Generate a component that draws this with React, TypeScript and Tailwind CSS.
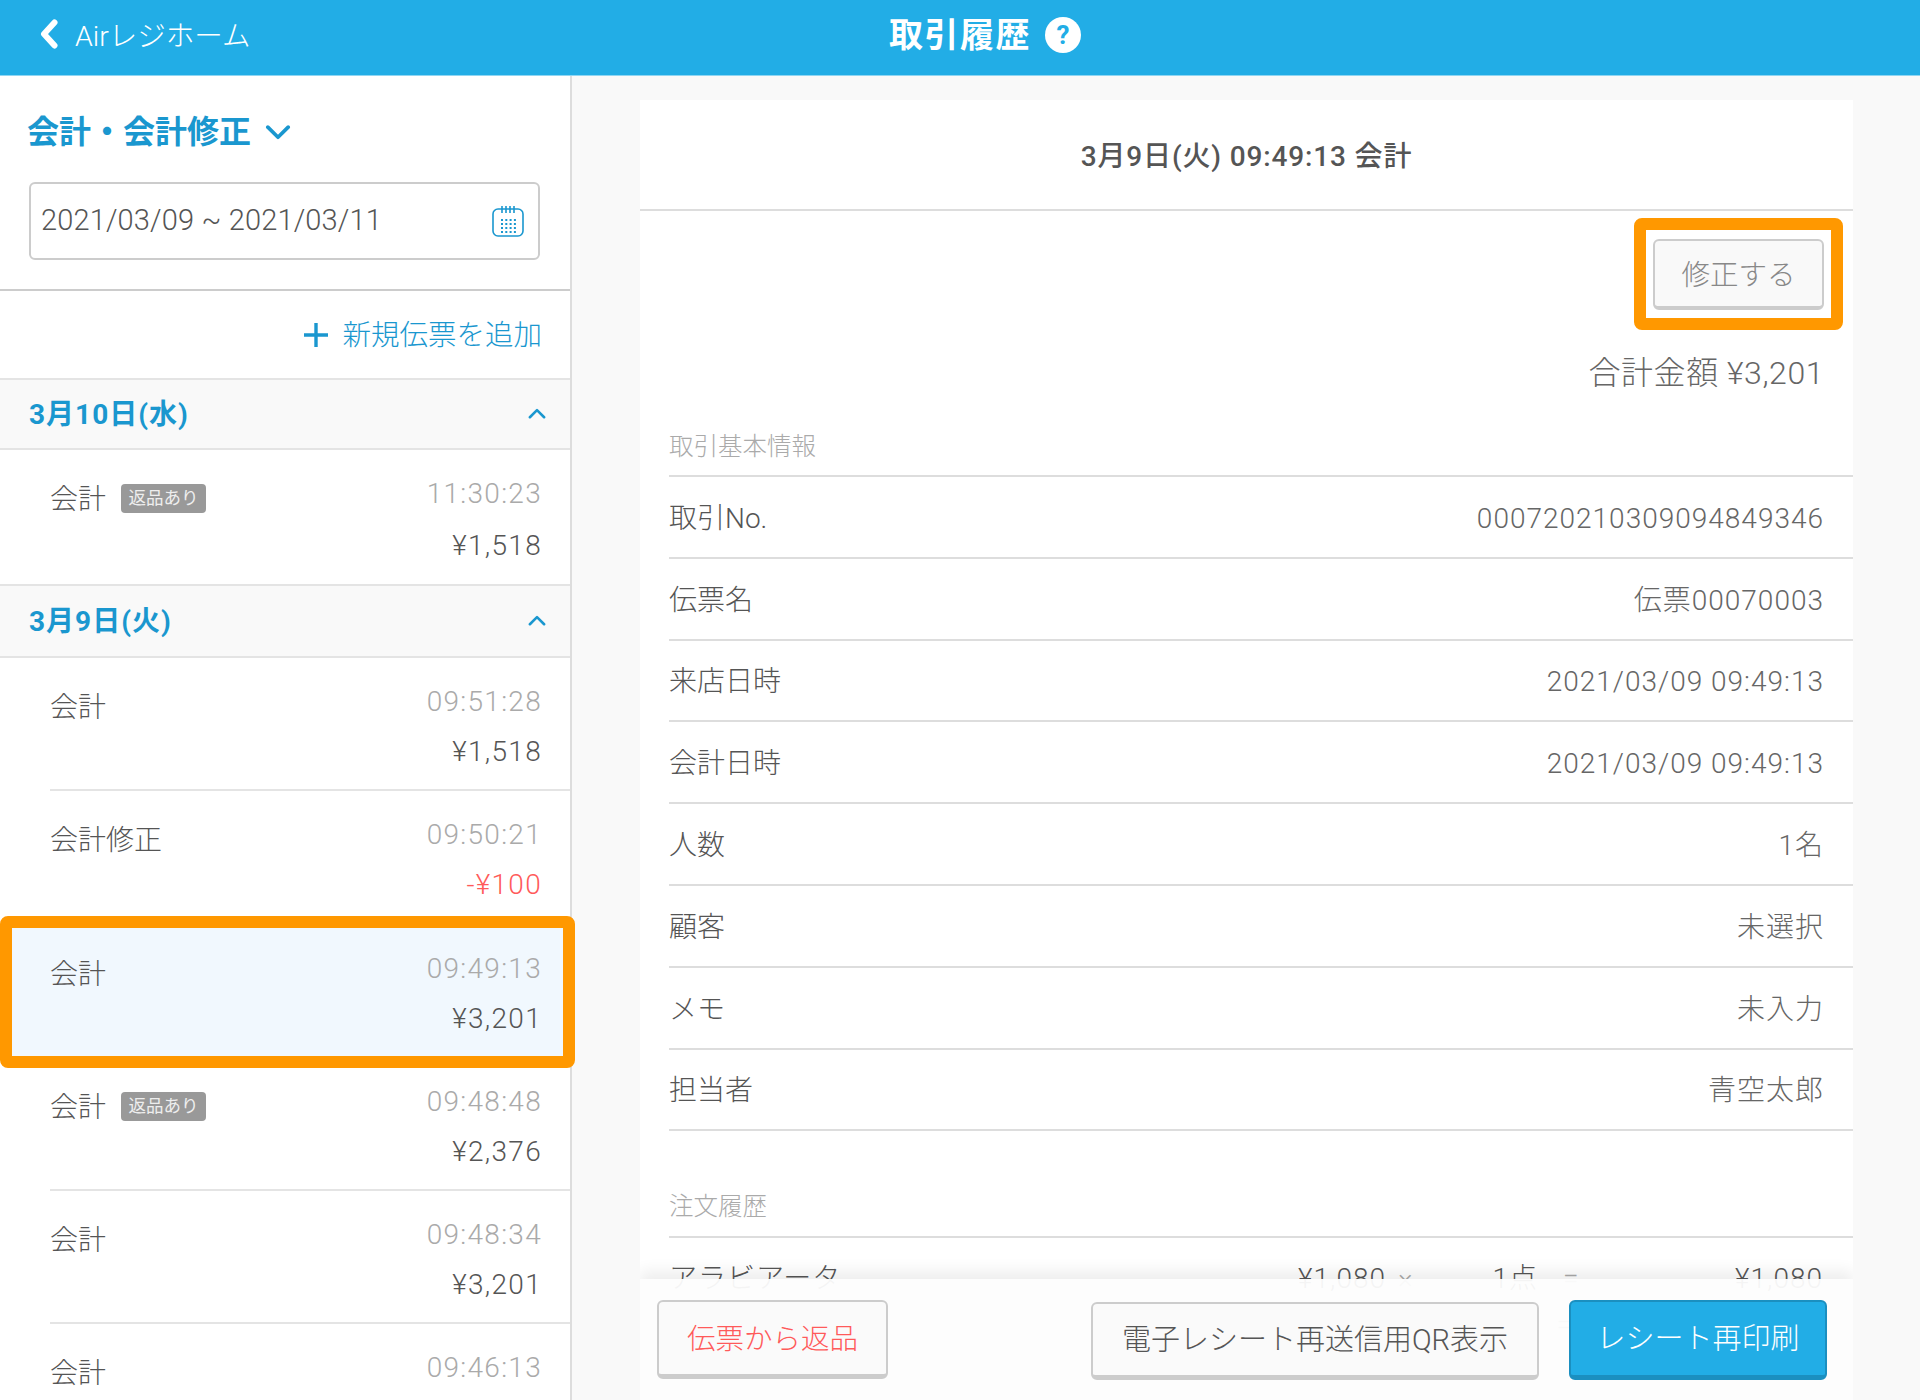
import React from 'react';

const rowsA = [{ label: '会計', badge: true, time: '11:30:23', amount: '¥1,518' }];
const rowsB = [
  { label: '会計', time: '09:51:28', amount: '¥1,518' },
  { label: '会計修正', time: '09:50:21', amount: '-¥100', minus: true },
  { label: '会計', time: '09:49:13', amount: '¥3,201', selected: true },
  { label: '会計', badge: true, time: '09:48:48', amount: '¥2,376' },
  { label: '会計', time: '09:48:34', amount: '¥3,201' },
  { label: '会計', time: '09:46:13', amount: '' },
];
const info = [
  ['取引No.', '000720210309094849346'],
  ['伝票名', '伝票00070003'],
  ['来店日時', '2021/03/09 09:49:13'],
  ['会計日時', '2021/03/09 09:49:13'],
  ['人数', '1名'],
  ['顧客', '未選択'],
  ['メモ', '未入力'],
  ['担当者', '青空太郎'],
];

type Row = { label: string; badge?: boolean; time: string; amount: string; minus?: boolean; selected?: boolean };

function Chevron({ up, className }: { up?: boolean; className: string }) {
  return (
    <svg viewBox="0 0 24 14" className={className} fill="none" stroke="currentColor" strokeWidth="3.4" strokeLinecap="round" strokeLinejoin="round">
      <path d={up ? 'M2.5 12 12 2.5 21.5 12' : 'M2.5 2 12 11.5 21.5 2'} />
    </svg>
  );
}

function DateHeader({ text, h }: { text: string; h: string }) {
  return (
    <div className={`flex items-center justify-between bg-[#f9f9f9] border-y-2 border-[#e4e4e4] pl-[29px] pr-[24px] ${h}`}>
      <span className="text-[28px] font-bold text-[#1a97cf] tracking-[1px] mt-[2px]">{text}</span>
      <Chevron up className="w-[18px] h-[11px] text-[#1a97cf] mb-[2px]" />
    </div>
  );
}

function SlipRow({ row, last, h, gap }: { row: Row; last?: boolean; h: string; gap?: boolean }) {
  return (
    <div className={`relative ${h} ${row.selected ? 'bg-[#f1f8fe]' : ''}`}>
      <div className={`ml-[50px] h-full pr-[28px] flex justify-between ${last ? '' : 'border-b-2 border-[#e4e4e4]'}`}>
        <div className="flex items-start pt-[30px]">
          <span className="text-[28px] leading-[40px] text-[#555] font-light">{row.label}</span>
          {row.badge && (
            <span className="ml-[15px] mt-[4px] w-[85px] h-[29px] rounded-[4px] bg-[#999] text-[#eee] text-[17.5px] leading-[29px] text-center">返品あり</span>
          )}
        </div>
        <div className="text-right pt-[19px]">
          <div className="text-[28px] leading-[50px] text-[#aaa] font-light tracking-[1.3px]">{row.time}</div>
          <div className={`text-[28px] leading-[50px] font-light tracking-[1.3px] ${gap ? 'mt-[2px]' : ''} ${row.minus ? 'text-[#ff5a5a]' : 'text-[#555]'}`}>{row.amount}</div>
        </div>
      </div>
      {row.selected && (
        <div className="absolute left-0 right-[-5px] top-[-9px] bottom-[-10px] border-[12px] border-[#ff9800] rounded-[8px]" />
      )}
    </div>
  );
}

export default function App() {
  return (
    <div className="w-[1920px] h-[1400px] overflow-hidden flex flex-col bg-[#f9f9f9] text-[#555] font-['Roboto','Noto_Sans_CJK_JP',sans-serif]">
      <header className="relative z-20 h-[75px] shrink-0 bg-[#22ade6] shadow-[0_1px_0_#8fd6f3] text-white flex items-center justify-center">
        <div className="absolute left-[40px] top-0 h-full flex items-center">
          <svg viewBox="0 0 18 30" className="w-[18px] h-[30px] mb-[7px]" fill="none" stroke="currentColor" strokeWidth="6" strokeLinecap="round" strokeLinejoin="round">
            <path d="M14.5 3.5 4 15l10.5 11.5" />
          </svg>
          <span className="ml-[17px] text-[28.5px] font-light">Airレジホーム</span>
        </div>
        <div className="flex items-center ml-[50px] mb-[5px]">
          <span className="text-[34px] font-bold tracking-[1.5px]">取引履歴</span>
          <span className="ml-[14px] w-[36px] h-[36px] rounded-full bg-white text-[#22ade6] text-[26px] font-bold leading-[36px] text-center">?</span>
        </div>
      </header>

      <div className="flex flex-1 min-h-0">
        <aside className="relative z-10 w-[572px] shrink-0 bg-white border-r-2 border-[#ddd]">
          <div className="h-[214px] pl-[29px] pr-[30px] pt-[35px]">
            <div className="flex items-center h-[44px] ml-[-2px]">
              <span className="text-[32px] font-bold text-[#1a97cf] whitespace-nowrap">会計・会計修正</span>
              <Chevron className="ml-[14px] w-[26px] h-[15px] text-[#1a97cf]" />
            </div>
            <div className="mt-[28px] h-[78px] rounded-[6px] border-2 border-[#ccc] flex items-center justify-between pl-[10px] pr-[14px]">
              <span className="text-[29px] text-[#555] font-light tracking-[0.15px]">2021/03/09 ~ 2021/03/11</span>
              <svg viewBox="0 0 32 32" className="w-[32px] h-[32px] mb-[1px]" fill="none" stroke="#1a97cf">
                <rect x="1" y="4" width="30" height="27" rx="5" strokeWidth="1.6" />
                <path d="M10 1v7M14 1v7M18 1v7M22 1v7" strokeWidth="1.6" />
                <path d="M9 15h15M9 19h15M9 23h15M9 27h15" strokeWidth="2" strokeDasharray="2 2.3" />
              </svg>
            </div>
          </div>
          <div className="h-[89px] border-t-2 border-[#ccc] flex items-center justify-end pr-[28px] text-[#1a97cf]">
            <svg viewBox="0 0 26 26" className="w-[26px] h-[26px]" fill="none" stroke="currentColor" strokeWidth="3.4">
              <path d="M13 1v24M1 13h24" />
            </svg>
            <span className="ml-[13px] text-[28.5px] font-light mt-[4px]">新規伝票を追加</span>
          </div>
          <DateHeader text="3月10日(水)" h="h-[72px]" />
          {rowsA.map((r) => (
            <SlipRow key={r.time} row={r} last gap h="h-[134px]" />
          ))}
          <DateHeader text="3月9日(火)" h="h-[74px]" />
          {rowsB.map((r, i) => (
            <SlipRow key={r.time} row={r} h="h-[133.3px]" last={i === rowsB.length - 1} />
          ))}
        </aside>

        <main className="flex-1 min-w-0 pl-[68px] pr-[67px] pt-[25px]">
          <div className="relative h-full bg-white overflow-hidden">
            <div className="h-[111px] border-b-2 border-[#ddd] flex items-center justify-center">
              <span className="text-[28px] font-medium text-[#555] tracking-[0.85px] mt-[4px]">3月9日(火) 09:49:13 会計</span>
            </div>
            <div className="flex justify-end pr-[10px] pt-[7px]">
              <div className="w-[209px] h-[112px] border-[12px] border-[#ff9800] rounded-[8px] pl-[7px] pt-[9px]">
                <div className="w-[171px] h-[71px] rounded-[6px] bg-[#f9f9f9] border-2 border-b-[4px] border-[#ccc] text-[28.5px] text-[#888] font-light flex items-center justify-center pt-[6px]">修正する</div>
              </div>
            </div>
            <div className="mt-[21px] pr-[29px] text-right text-[32px] leading-[44px] tracking-[0.55px] text-[#666] font-light">合計金額 ¥3,201</div>

            <div className="ml-[29px]">
              <div className="h-[82px] flex items-end pb-[10px] border-b-2 border-[#ddd] text-[24.5px] leading-[36px] text-[#aaa] font-light">取引基本情報</div>
              {info.map(([k, v]) => (
                <div key={k} className="h-[81.8px] pr-[29px] pt-[4px] border-b-2 border-[#ddd] flex items-center justify-between text-[28px] font-light">
                  <span className="text-[#555]">{k}</span>
                  <span className="text-[#666] tracking-[1px]">{v}</span>
                </div>
              ))}
              <div className="h-[106.5px] flex items-end pb-[11px] border-b-2 border-[#ddd] text-[24.5px] leading-[36px] text-[#aaa] font-light">注文履歴</div>
              <div className="mt-[18px] text-[28px] tracking-[1px] font-light text-[#555]">
                <div className="h-[46px] pr-[30px] flex items-center">
                  <span className="flex-1">アラビアータ</span>
                  <span>¥1,080</span>
                  <span className="ml-[12px] w-[16px] text-[#aaa]">×</span>
                  <span className="w-[124px] text-right">1点</span>
                  <span className="ml-[25px] w-[16px] text-[#aaa]">=</span>
                  <span className="w-[244px] text-right">¥1,080</span>
                </div>
                <div className="h-[46px] flex items-center">
                  <span className="ml-auto mr-[280px] text-[#aaa]">=</span>
                </div>
              </div>
            </div>

            <div className="absolute left-0 right-0 bottom-0 h-[121px] bg-[#fdfdfd]/95 shadow-[0_-8px_14px_rgba(0,0,0,0.07)] flex items-start pt-[21px] pl-[17px] pr-[26px]">
              <button className="w-[231px] h-[79px] pt-[5px] rounded-[6px] bg-[#fafafa] border-2 border-b-[5px] border-[#ccc] text-[28.5px] font-light text-[#ff5a5a]">伝票から返品</button>
              <div className="flex-1" />
              <button className="mt-[2px] w-[448px] h-[78px] pt-[2px] rounded-[6px] bg-[#fafafa] border-2 border-b-[5px] border-[#ccc] text-[29px] font-light text-[#555]">電子レシート再送信用QR表示</button>
              <button className="ml-[30px] w-[258px] h-[80px] pt-[2px] rounded-[6px] bg-[#22ade6] border-2 border-b-[5px] border-[#1b8fc0] text-[29px] font-light text-white">レシート再印刷</button>
            </div>
          </div>
        </main>
      </div>
    </div>
  );
}
